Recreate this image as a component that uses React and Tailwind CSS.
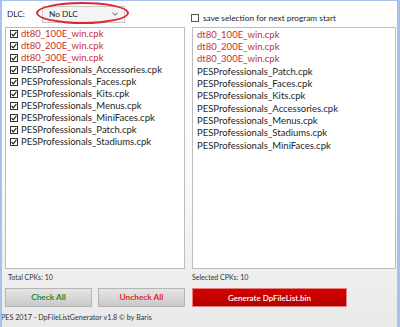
import { useState } from "react";

const leftFiles = [
  { name: "dt80_100E_win.cpk", dlc: true },
  { name: "dt80_200E_win.cpk", dlc: true },
  { name: "dt80_300E_win.cpk", dlc: true },
  { name: "PESProfessionals_Accessories.cpk" },
  { name: "PESProfessionals_Faces.cpk" },
  { name: "PESProfessionals_Kits.cpk" },
  { name: "PESProfessionals_Menus.cpk" },
  { name: "PESProfessionals_MiniFaces.cpk" },
  { name: "PESProfessionals_Patch.cpk" },
  { name: "PESProfessionals_Stadiums.cpk" },
];

const rightFiles = [
  { name: "dt80_100E_win.cpk", dlc: true },
  { name: "dt80_200E_win.cpk", dlc: true },
  { name: "dt80_300E_win.cpk", dlc: true },
  { name: "PESProfessionals_Patch.cpk" },
  { name: "PESProfessionals_Faces.cpk" },
  { name: "PESProfessionals_Kits.cpk" },
  { name: "PESProfessionals_Accessories.cpk" },
  { name: "PESProfessionals_Menus.cpk" },
  { name: "PESProfessionals_Stadiums.cpk" },
  { name: "PESProfessionals_MiniFaces.cpk" },
];

const Check = ({ on }) => (
  <span className="w-[8px] h-[8px] border border-[#333] bg-white flex items-center justify-center shrink-0">
    {on && (
      <svg width="6" height="6" viewBox="0 0 6 6">
        <path d="M0.6 3 L2.3 4.8 L5.4 0.9" fill="none" stroke="#222" strokeWidth="1.1" />
      </svg>
    )}
  </span>
);

const App = () => {
  const [save, setSave] = useState(false);

  return (
    <div
      className="w-[400px] h-[327px] flex flex-col bg-gradient-to-b from-[#fefefe] via-[#fbfbfb] to-[#e9e9e9] border-l-2 border-r-[3px] border-t border-[#a9c0ea] text-[#1e1e1e] overflow-hidden"
      style={{ fontFamily: 'Lato, "Open Sans", sans-serif' }}
    >
      {/* Top bar */}
      <div className="h-[26px] flex items-center pl-[5px] text-[8.3px]">
        <span className="w-[29px]">DLC:</span>
        <div className="relative">
          <div className="w-[83px] h-[17px] ml-[6px] border border-[#c9c9c9] bg-[#f4f4f4] flex items-center justify-between pl-[6px] pr-[6px]">
            <span>No DLC</span>
            <svg width="6" height="4" viewBox="0 0 6 4">
              <path d="M0.5 0.8 L3 3.2 L5.5 0.8" fill="none" stroke="#555" strokeWidth="1" />
            </svg>
          </div>
          <div className="absolute left-0 top-[-4px] w-[93px] h-[22px] rounded-[50%] border-2 border-[#e0262b]" />
        </div>
        <label className="ml-[66px] mt-[8px] flex items-center gap-[4px] leading-[10px]" onClick={() => setSave(!save)}>
          <span className="w-[8px] h-[8px] border border-[#555] bg-white" />
          <span>save selection for next program start</span>
        </label>
      </div>

      {/* Lists */}
      <div className="flex gap-[7px] pl-[3px] text-[9.5px]">
        <div className="w-[180px] h-[242px] border border-[#bdbdbd] bg-white pl-[4px]">
          {leftFiles.map((f) => (
            <div key={f.name} className="h-[12px] leading-[12px] flex items-center gap-[3px]">
              <Check on />
              <span className={f.dlc ? "text-[#c8302c]" : ""}>{f.name}</span>
            </div>
          ))}
        </div>
        <div className="w-[204px] h-[242px] border border-[#bdbdbd] bg-white pt-[0.5px] pl-[4px]">
          {rightFiles.map((f) => (
            <div key={f.name} className={`h-[12.33px] leading-[12px] flex items-center ${f.dlc ? "text-[#c8302c]" : ""}`}>
              {f.name}
            </div>
          ))}
        </div>
      </div>

      {/* Counts */}
      <div className="h-[16px] flex items-center text-[7px] text-[#333]">
        <span className="w-[187px] pl-[6px]">Total CPKs: 10</span>
        <span className="pl-[3px]">Selected CPKs: 10</span>
      </div>

      {/* Buttons */}
      <div className="flex pl-[3px] mt-[3px] h-[19px] font-bold text-[8.3px]">
        <button className="w-[87px] h-full border border-[#b5b5b5] bg-gradient-to-b from-[#e6e6e6] to-[#c9c9c9] text-[#2a8a2a]">
          Check All
        </button>
        <button className="w-[87px] h-full ml-[6px] border border-[#b5b5b5] bg-gradient-to-b from-[#e6e6e6] to-[#c9c9c9] text-[#e3262b]">
          Uncheck All
        </button>
        <button className="w-[155px] h-full ml-[7px] border border-[#e58080] bg-gradient-to-b from-[#d80000] to-[#b30000] text-white font-semibold text-[8px]">
          Generate DpFileList.bin
        </button>
      </div>

      {/* Footer */}
      <div className="mt-[6px] text-[7.2px] leading-[10px] text-[#333] -ml-[1px]">PES 2017 - DpFileListGenerator v1.8 © by Baris</div>
    </div>
  );
};

export default App;
